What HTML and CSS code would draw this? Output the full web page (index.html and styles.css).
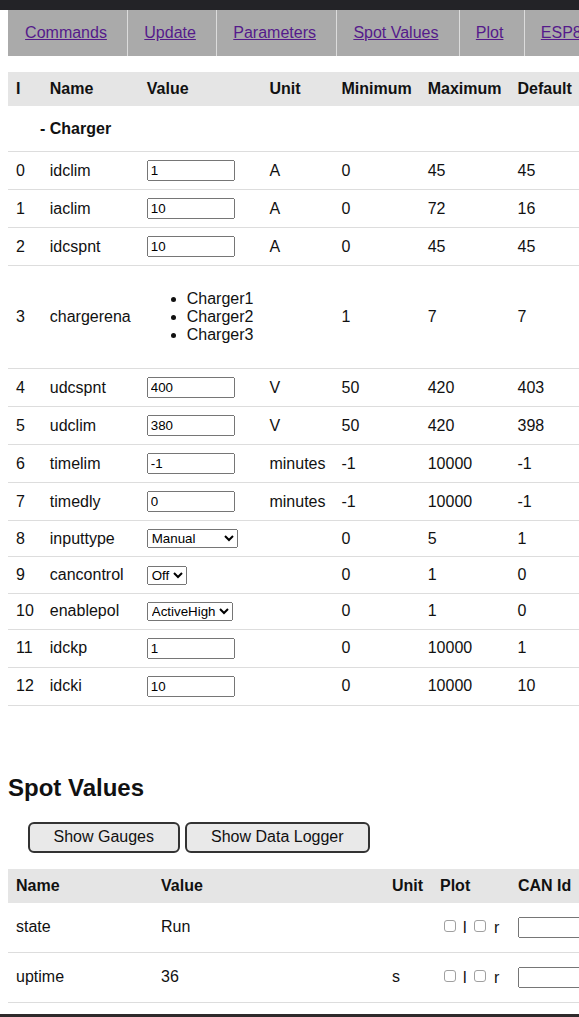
FILE: index.html
```html
<!DOCTYPE html>
<html>
<head>
<meta charset="utf-8">
<link rel="stylesheet" href="styles.css">
</head>
<body>
<div class="topbar"></div>
<div class="page">
  <nav class="nav">
    <a href="#">Commands</a>
    <a href="#">Update</a>
    <a href="#">Parameters</a>
    <a href="#">Spot Values</a>
    <a href="#">Plot</a>
    <a href="#">ESP8266</a>
  </nav>

  <table class="params">
    <thead>
      <tr><th>I</th><th>Name</th><th>Value</th><th>Unit</th><th>Minimum</th><th>Maximum</th><th>Default</th></tr>
    </thead>
    <tbody>
      <tr><td class="cat" colspan="7">- Charger</td></tr>
      <tr><td>0</td><td>idclim</td><td><input class="val" type="text" value="1"></td><td>A</td><td>0</td><td>45</td><td>45</td></tr>
      <tr><td>1</td><td>iaclim</td><td><input class="val" type="text" value="10"></td><td>A</td><td>0</td><td>72</td><td>16</td></tr>
      <tr><td>2</td><td>idcspnt</td><td><input class="val" type="text" value="10"></td><td>A</td><td>0</td><td>45</td><td>45</td></tr>
      <tr><td>3</td><td>chargerena</td><td><ul class="opts"><li>Charger1</li><li>Charger2</li><li>Charger3</li></ul></td><td></td><td>1</td><td>7</td><td>7</td></tr>
      <tr><td>4</td><td>udcspnt</td><td><input class="val" type="text" value="400"></td><td>V</td><td>50</td><td>420</td><td>403</td></tr>
      <tr><td>5</td><td>udclim</td><td><input class="val" type="text" value="380"></td><td>V</td><td>50</td><td>420</td><td>398</td></tr>
      <tr><td>6</td><td>timelim</td><td><input class="val" type="text" value="-1"></td><td>minutes</td><td>-1</td><td>10000</td><td>-1</td></tr>
      <tr><td>7</td><td>timedly</td><td><input class="val" type="text" value="0"></td><td>minutes</td><td>-1</td><td>10000</td><td>-1</td></tr>
      <tr><td>8</td><td>inputtype</td><td><select class="sel sel-wide"><option>Manual</option></select></td><td></td><td>0</td><td>5</td><td>1</td></tr>
      <tr><td>9</td><td>cancontrol</td><td><select class="sel"><option>Off</option><option>On</option></select></td><td></td><td>0</td><td>1</td><td>0</td></tr>
      <tr><td>10</td><td>enablepol</td><td><select class="sel"><option>ActiveHigh</option><option>ActiveLow</option></select></td><td></td><td>0</td><td>1</td><td>0</td></tr>
      <tr><td>11</td><td>idckp</td><td><input class="val" type="text" value="1"></td><td></td><td>0</td><td>10000</td><td>1</td></tr>
      <tr><td>12</td><td>idcki</td><td><input class="val" type="text" value="10"></td><td></td><td>0</td><td>10000</td><td>10</td></tr>
    </tbody>
  </table>

  <h2 class="section-title">Spot Values</h2>
  <div class="buttons">
    <button class="btn btn-gauges" type="button">Show Gauges</button>
    <button class="btn btn-logger" type="button">Show Data Logger</button>
  </div>

  <table class="spot">
    <colgroup>
      <col class="c-name"><col class="c-value"><col class="c-unit"><col class="c-plot"><col class="c-can">
    </colgroup>
    <thead>
      <tr><th>Name</th><th>Value</th><th>Unit</th><th>Plot</th><th>CAN Id</th></tr>
    </thead>
    <tbody>
      <tr><td>state</td><td>Run</td><td></td><td class="plot"><input class="chk" type="checkbox"> l <input class="chk" type="checkbox"> r</td><td><input class="val" type="text" value=""></td></tr>
      <tr><td>uptime</td><td>36</td><td>s</td><td class="plot"><input class="chk" type="checkbox"> l <input class="chk" type="checkbox"> r</td><td><input class="val" type="text" value=""></td></tr>
    </tbody>
  </table>
</div>
<div class="footer"></div>
</body>
</html>
```

FILE: styles.css
```css
html {
  overflow: hidden;
}

body {
  margin: 0;
  font-family: "Liberation Sans", Arial, sans-serif;
  font-size: 16px;
  color: #111;
  background: #fff;
}

.topbar {
  height: 10px;
  background: #232327;
}

.page {
  padding: 0 8px;
}

.nav {
  display: flex;
  width: max-content;
  background: #aaaaaa;
}

.nav a {
  display: block;
  padding: 14px 20.3px 14px 16.1px;
  border-left: 1px solid #dcdcdc;
  color: #551a8b;
  white-space: nowrap;
}

.nav a:first-child {
  border-left-color: #aaaaaa;
}

table {
  border-collapse: collapse;
}

th {
  background: #e5e5e5;
  text-align: left;
  font-weight: bold;
  padding: 8px;
  white-space: nowrap;
}

td {
  padding: 8px;
  border-bottom: 1px solid #dddddd;
  white-space: nowrap;
}

.params {
  margin-top: 16px;
}

.params td.cat {
  font-weight: bold;
  padding: 13.5px 8px 13.5px 32px;
}

.opts {
  margin: 16px 0;
  padding-left: 40px;
}

input.val {
  width: 88px;
  box-sizing: border-box;
  font-family: "Liberation Sans", Arial, sans-serif;
  font-size: 13.33px;
  margin: 0;
  vertical-align: middle;
}

.sel {
  font-family: "Liberation Sans", Arial, sans-serif;
  font-size: 13.33px;
  margin: 0;
  vertical-align: middle;
}

.sel-wide {
  width: 91px;
}

.section-title {
  font-size: 24px;
  font-weight: bold;
  margin: 68px 0 20px;
  line-height: normal;
}

.buttons {
  display: flex;
  gap: 5px;
  padding-left: 20px;
}

.btn {
  font-family: "Liberation Sans", Arial, sans-serif;
  font-size: 16px;
  color: #111;
  border: 2px solid #333;
  border-radius: 6px;
  background: #e9e9e9;
  line-height: normal;
}

.btn-gauges {
  padding: 4.5px 23.5px;
}

.btn-logger {
  padding: 4.5px 24.5px;
}

.spot {
  margin-top: 16px;
  table-layout: fixed;
  width: 640px;
}

.c-name { width: 145px; }
.c-value { width: 231px; }
.c-unit { width: 48px; }
.c-plot { width: 78px; }
.c-can { width: 138px; }

.spot td {
  padding: 14px 8px;
}

.chk {
  appearance: none;
  -webkit-appearance: none;
  box-sizing: border-box;
  width: 12px;
  height: 12px;
  border: 1px solid #a0a0a0;
  border-radius: 3px;
  margin: 3px 3px 3px 3.5px;
  vertical-align: -2px;
  background: #fff;
}

.footer {
  margin-top: 11px;
  height: 40px;
  background: #2e2a2b;
}
```
